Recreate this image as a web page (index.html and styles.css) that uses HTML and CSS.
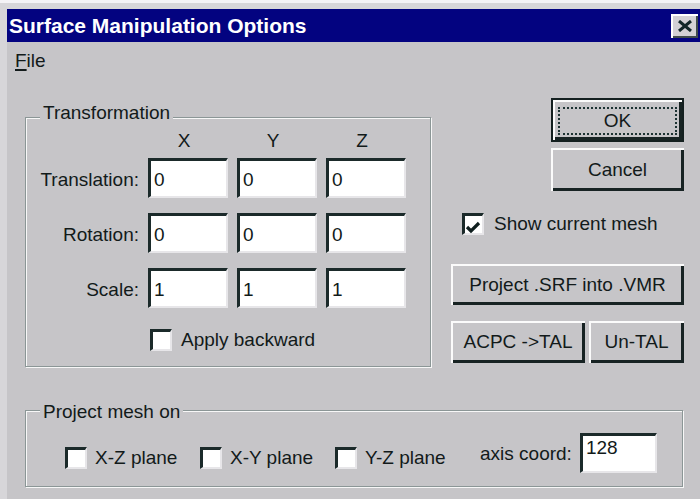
FILE: index.html
```html
<!DOCTYPE html>
<html>
<head>
<meta charset="utf-8">
<title>Surface Manipulation Options</title>
<link rel="stylesheet" href="styles.css">
</head>
<body>
<div class="screen">
  <div class="window">
    <div class="titlebar">
      <span class="title">Surface Manipulation Options</span>
      <span class="close">
        <svg width="14" height="12" viewBox="0 0 14 12"><path d="M1 1 L13 11 M13 1 L1 11" stroke="#13282a" stroke-width="3" fill="none"/></svg>
      </span>
    </div>
    <div class="menubar"><span class="menu"><u>F</u>ile</span></div>

    <div class="main">
      <div class="group transform">
        <span class="legend">Transformation</span>
        <div class="axes">
          <span></span><span class="axis">X</span><span class="axis">Y</span><span class="axis">Z</span>
        </div>
        <div class="rows">
          <span class="rowlabel">Translation:</span>
          <div class="field">0</div><div class="field">0</div><div class="field">0</div>
          <span class="rowlabel">Rotation:</span>
          <div class="field">0</div><div class="field">0</div><div class="field">0</div>
          <span class="rowlabel">Scale:</span>
          <div class="field">1</div><div class="field">1</div><div class="field">1</div>
        </div>
        <div class="checkrow apply"><span class="check"></span>Apply backward</div>
      </div>

      <div class="side">
        <button class="btn ok"><span class="focus">OK</span></button>
        <button class="btn cancel">Cancel</button>
        <div class="checkrow mesh">
          <span class="check">
            <svg width="16" height="16" viewBox="0 0 16 16"><path d="M2 7 L6 11 L14 3" stroke="#0f1e1e" stroke-width="3.2" fill="none"/></svg>
          </span>Show current mesh
        </div>
        <button class="btn wide">Project .SRF into .VMR</button>
        <div class="pair">
          <button class="btn acpc">ACPC -&gt;TAL</button>
          <button class="btn untal">Un-TAL</button>
        </div>
      </div>
    </div>

    <div class="group project">
      <span class="legend">Project mesh on</span>
      <div class="checkrow opt"><span class="check"></span>X-Z plane</div>
      <div class="checkrow opt"><span class="check"></span>X-Y plane</div>
      <div class="checkrow opt last"><span class="check"></span>Y-Z plane</div>
      <span class="coordlabel">axis coord:</span>
      <div class="field coord">128</div>
    </div>
  </div>
</div>
</body>
</html>
```
FILE: styles.css
```css
html, body {
  margin: 0;
  padding: 0;
}

body {
  width: 700px;
  height: 499px;
  overflow: hidden;
  background: #dcdbde;
  font-family: "Liberation Sans", Arial, sans-serif;
  font-size: 19px;
  color: #121a1a;
}

.screen {
  height: 499px;
  box-sizing: border-box;
  border-top: 3px solid #f4f3f6;
  padding: 6px 0 0 7px;
  background: #d7d6d9;
}

.window {
  height: 490px;
  background: #c6c5c8;
}

/* caption bar */
.titlebar {
  height: 33px;
  background: #030380;
  display: flex;
  align-items: center;
  justify-content: space-between;
  padding-left: 2px;
}

.title {
  color: #ffffff;
  font-weight: bold;
  font-size: 21px;
  line-height: 1;
}

.close {
  width: 27px;
  height: 24px;
  margin-right: 2px;
  background: #d3d1d5;
  box-shadow: inset 2px 2px #ffffff, inset -2px -2px #404c4c;
  display: flex;
  align-items: center;
  justify-content: center;
}

/* menu */
.menubar {
  height: 34px;
  box-sizing: border-box;
  padding: 4px 0 0 8px;
  line-height: 30px;
}

.menu u {
  text-decoration-thickness: 2px;
  text-underline-offset: 2px;
}

/* layout */
.main {
  display: flex;
  align-items: flex-start;
  margin-top: 22px;
  padding-left: 18px;
}

/* etched group frame */
.group {
  position: relative;
  box-sizing: border-box;
  border: 1px solid #8b9696;
  box-shadow: inset 1px 1px #f7f7f7, 1px 1px #f7f7f7;
}

.legend {
  position: absolute;
  left: 14px;
  padding: 0 3px;
  background: #c6c5c8;
  line-height: 24px;
  white-space: nowrap;
}

.transform {
  width: 406px;
  height: 250px;
  margin-top: 19px;
  padding-top: 11px;
}

.transform .legend {
  top: -17px;
}

.axes,
.rows {
  display: grid;
  grid-template-columns: 113px 80px 80px 80px;
  column-gap: 9px;
}

.axes {
  height: 24px;
  line-height: 24px;
  margin-bottom: 5px;
}

.axis {
  text-align: center;
  padding-right: 8px;
}

.rows {
  grid-auto-rows: 40px;
  row-gap: 15px;
}

.rowlabel {
  align-self: center;
  text-align: right;
  line-height: 24px;
  padding-top: 3px;
}

/* sunken edit box */
.field {
  box-sizing: border-box;
  height: 40px;
  background: #ffffff;
  border-top: 3px solid #1b2a2a;
  border-left: 3px solid #1b2a2a;
  border-right: 2px solid #e7e6e9;
  border-bottom: 2px solid #e7e6e9;
  padding: 7px 0 0 3px;
  line-height: 24px;
}

/* check boxes */
.checkrow {
  display: flex;
  align-items: center;
  line-height: 24px;
  white-space: nowrap;
}

.check {
  flex: none;
  box-sizing: border-box;
  width: 22px;
  height: 22px;
  background: #ffffff;
  border-top: 3px solid #1b2a2a;
  border-left: 3px solid #1b2a2a;
  border-right: 2px solid #e7e6e9;
  border-bottom: 2px solid #e7e6e9;
  display: flex;
  align-items: flex-start;
  justify-content: flex-start;
}

.check svg {
  display: block;
}

.apply {
  margin: 20px 0 0 124px;
  gap: 9px;
}

/* right column */
.side {
  width: 233px;
  margin-left: 20px;
  display: flex;
  flex-direction: column;
}

.btn {
  font: inherit;
  color: inherit;
  background: #c6c5c8;
  border: 0;
  padding: 0;
  margin: 0;
  box-sizing: border-box;
  display: flex;
  align-items: center;
  justify-content: center;
  line-height: 24px;
  white-space: nowrap;
  box-shadow: inset 2px 2px #fbfbfb, inset -3px -3px #172323;
}

.ok {
  align-self: flex-end;
  width: 133px;
  height: 44px;
  border: 2px solid #142020;
  padding: 7px 5px 5px 5px;
  align-items: stretch;
}

.focus {
  flex: 1;
  border: 2px dotted #1d3333;
  display: flex;
  align-items: center;
  justify-content: center;
}

.cancel {
  align-self: flex-end;
  width: 133px;
  height: 43px;
  margin-top: 6px;
}

.mesh {
  margin: 22px 0 0 11px;
  height: 22px;
  gap: 10px;
}

.mesh .check {
  padding: 4px 0 0 0;
}

.wide {
  height: 41px;
  margin-top: 29px;
}

.pair {
  display: flex;
  gap: 4px;
  margin-top: 16px;
}

.acpc {
  width: 134px;
  height: 42px;
}

.untal {
  width: 95px;
  height: 42px;
}

/* lower group */
.project {
  width: 658px;
  height: 77px;
  margin: 43px 0 0 18px;
  padding: 22px 0 0 39px;
  display: flex;
  align-items: flex-start;
}

.project .legend {
  top: -11px;
}

.opt {
  width: 135px;
  gap: 8px;
  margin-top: 13px;
}

.opt.last {
  width: 145px;
}

.coordlabel {
  line-height: 24px;
  margin-top: 9px;
  margin-right: 8px;
}

.coord {
  width: 77px;
  height: 40px;
  padding-top: 0;
}
```
